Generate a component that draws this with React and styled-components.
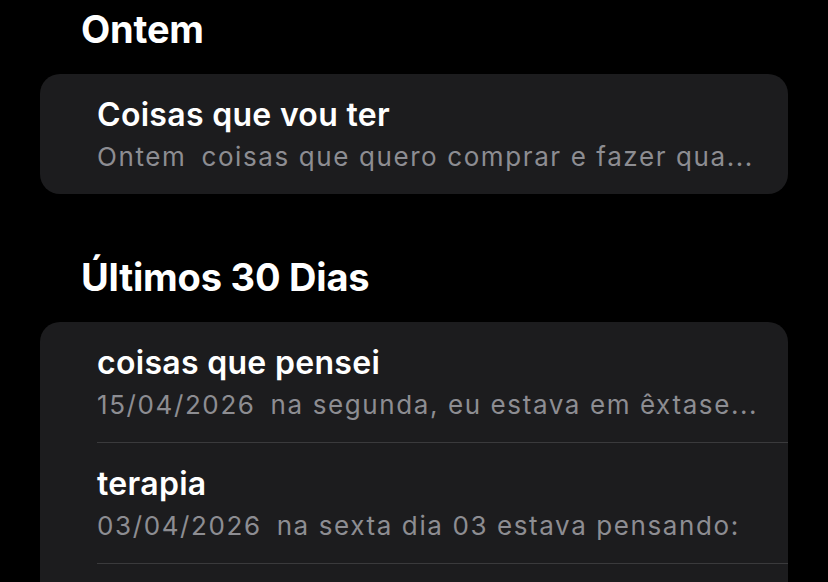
import React from "react";
import styled, { createGlobalStyle } from "styled-components";

const Global = createGlobalStyle`
  html, body {
    margin: 0;
    padding: 0;
    background: #000;
  }
  body {
    font-family: Inter, "Noto Sans", "Liberation Sans", sans-serif;
    -webkit-font-smoothing: antialiased;
  }
`;

const Page = styled.div`
  width: 828px;
  height: 582px;
  overflow: hidden;
  background: #000;
  padding: 0 40px;
  box-sizing: border-box;
`;

const Section = styled.section`
  display: flex;
  flex-direction: column;
  margin-top: ${(p) => p.$gap}px;
`;

const Heading = styled.h2`
  margin: 0 0 22px;
  padding-left: 41px;
  font-size: 38px;
  line-height: 46px;
  font-weight: 700;
  color: #fff;
  letter-spacing: -0.2px;
`;

const Card = styled.div`
  background: #1c1c1e;
  border-radius: 20px;
  overflow: hidden;
  padding-bottom: ${(p) => (p.$open ? 40 : 0)}px;
`;

const Row = styled.div`
  margin-left: 57px;
  padding: 22px 0 0;
  height: ${(p) => (p.$divider ? 121 : 120)}px;
  box-sizing: border-box;
  border-bottom: ${(p) => (p.$divider ? "1px solid #3a3a3c" : "none")};
  display: flex;
  flex-direction: column;
  gap: 8px;
`;

const Title = styled.div`
  font-size: 32px;
  line-height: 38px;
  font-weight: 600;
  color: #fff;
  white-space: nowrap;
  letter-spacing: 0.3px;
`;

const Preview = styled.div`
  font-size: 26px;
  line-height: 30px;
  font-weight: 400;
  color: #8d8d92;
  white-space: nowrap;
  letter-spacing: 1.6px;
`;

const Gap = styled.span`
  display: inline-block;
  width: 15px;
`;

function Note({ title, date, text, divider }) {
  return (
    <Row $divider={divider}>
      <Title>{title}</Title>
      <Preview>
        {date}
        <Gap />
        {text}
      </Preview>
    </Row>
  );
}

export default function App() {
  return (
    <>
      <Global />
      <Page>
        <Section $gap={6}>
          <Heading>Ontem</Heading>
          <Card>
            <Note
              title="Coisas que vou ter"
              date="Ontem"
              text="coisas que quero comprar e fazer qua..."
            />
          </Card>
        </Section>
        <Section $gap={60}>
          <Heading>Últimos 30 Dias</Heading>
          <Card $open>
            <Note
              title="coisas que pensei"
              date="15/04/2026"
              text="na segunda, eu estava em êxtase..."
              divider
            />
            <Note
              title="terapia"
              date="03/04/2026"
              text="na sexta dia 03 estava pensando:"
              divider
            />
          </Card>
        </Section>
      </Page>
    </>
  );
}
